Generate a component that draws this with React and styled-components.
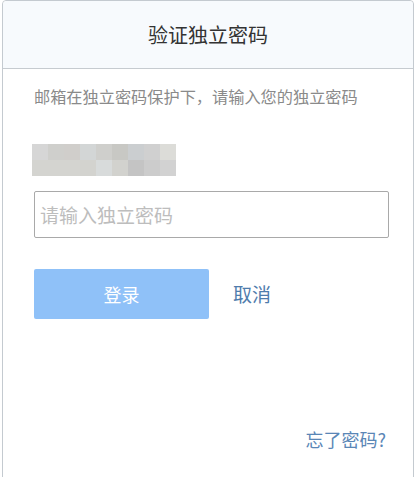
import styled, { createGlobalStyle } from "styled-components";

const GlobalStyle = createGlobalStyle`
  html, body {
    margin: 0;
    padding: 0;
    background: #ffffff;
    font-family: "Noto Sans CJK SC", "Noto Sans", "Liberation Sans", sans-serif;
  }
`;

const Page = styled.div`
  padding-left: 2px;
  width: 418px;
  height: 477px;
  box-sizing: border-box;
  overflow: hidden;
`;

const Card = styled.div`
  width: 412px;
  height: 520px;
  box-sizing: border-box;
  border: 1px solid #c4cad0;
  border-radius: 4px 4px 0 0;
  background: #ffffff;
  display: flex;
  flex-direction: column;
`;

const Header = styled.div`
  height: 67px;
  background: #f7fafd;
  border-bottom: 1px solid #c6cbd0;
  border-radius: 4px 4px 0 0;
  display: flex;
  align-items: center;
  justify-content: center;
`;

const Title = styled.h2`
  margin: 0;
  font-size: 20px;
  font-weight: 400;
  color: #333333;
  line-height: 24px;
`;

const Body = styled.div`
  display: flex;
  flex-direction: column;
  padding: 0 27px 0 31px;
`;

const Hint = styled.p`
  margin: 17px 0 0;
  font-size: 16.2px;
  line-height: 20px;
  color: #8a8a8a;
  white-space: nowrap;
`;

const Mosaic = styled.div`
  margin-top: 38px;
  display: grid;
  grid-template-columns: repeat(9, 16px);
  grid-auto-rows: 16px;
  width: 144px;
  margin-left: -2px;
`;

const Cell = styled.span`
  background: ${(props) => props.$tone};
`;

const PasswordInput = styled.input`
  margin-top: 15px;
  width: 355px;
  height: 47px;
  box-sizing: border-box;
  border: 1px solid #a9a9a9;
  border-radius: 2px;
  padding: 0 5px;
  font-family: inherit;
  font-size: 19px;
  color: #333;
  outline: none;

  &::placeholder {
    color: #bdbdbd;
  }
`;

const Actions = styled.div`
  margin-top: 31px;
  display: flex;
  align-items: center;
  gap: 24px;
`;

const LoginButton = styled.button`
  width: 175px;
  height: 50px;
  border: none;
  border-radius: 2px;
  background: #8fc1f8;
  color: #ffffff;
  font-family: inherit;
  font-size: 18px;
  cursor: pointer;
`;

const TextLink = styled.a`
  color: ${(props) => props.$color || "#4f7cac"};
  font-size: ${(props) => props.$size || "19px"};
  line-height: 20px;
  text-decoration: none;
  cursor: pointer;
`;

const Footer = styled.div`
  margin-top: 110px;
  display: flex;
  justify-content: flex-end;
`;

const tones = [
  "#d6d6d6", "#cfcfcc", "#d0cecb", "#d3d6d6", "#cfcfcc", "#c8c8c4", "#cbced0", "#d0d0d0", "#dcdcd8",
  "#d4d4d0", "#d4d4d0", "#d4d4d0", "#d3d3cf", "#d8dbdb", "#d2d2ce", "#c4c4c4", "#cccccc", "#d2d2d2",
];

const App = () => {
  return (
    <Page>
      <GlobalStyle />
      <Card>
        <Header>
          <Title>验证独立密码</Title>
        </Header>
        <Body>
          <Hint>邮箱在独立密码保护下，请输入您的独立密码</Hint>
          <Mosaic>
            {tones.map((tone, i) => (
              <Cell key={i} $tone={tone} />
            ))}
          </Mosaic>
          <PasswordInput type="password" placeholder="请输入独立密码" />
          <Actions>
            <LoginButton>登录</LoginButton>
            <TextLink>取消</TextLink>
          </Actions>
          <Footer>
            <TextLink $color="#5a86b6" $size="18px">
              忘了密码?
            </TextLink>
          </Footer>
        </Body>
      </Card>
    </Page>
  );
};

export default App;
